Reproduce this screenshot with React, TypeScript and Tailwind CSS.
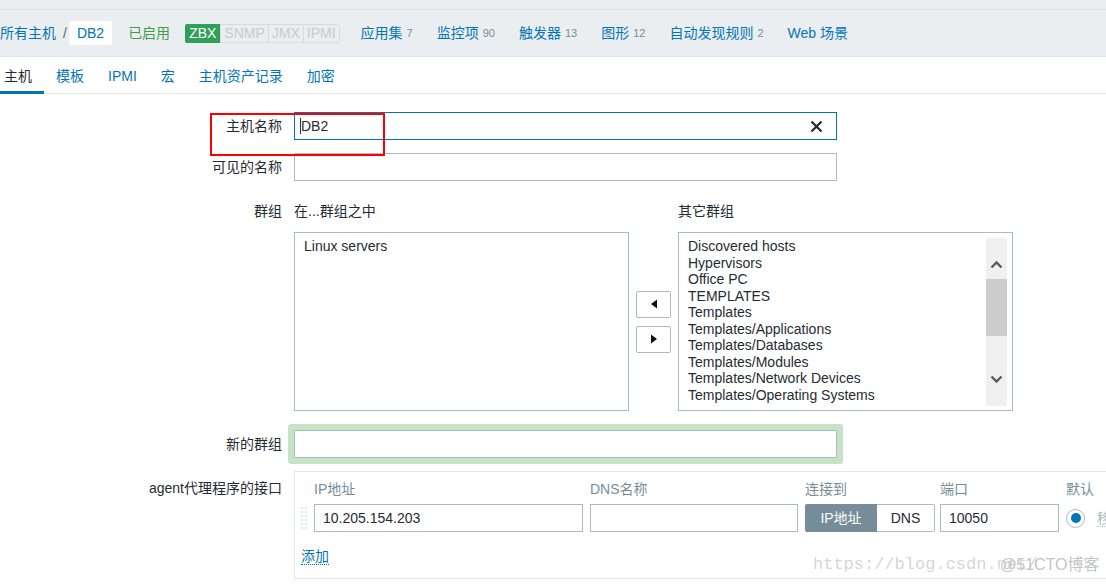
import React from "react";

const nav: [string, string][] = [
  ["应用集", "7"],
  ["监控项", "90"],
  ["触发器", "13"],
  ["图形", "12"],
  ["自动发现规则", "2"],
  ["Web 场景", ""],
];

const tabs = ["主机", "模板", "IPMI", "宏", "主机资产记录", "加密"];

const otherGroups = [
  "Discovered hosts",
  "Hypervisors",
  "Office PC",
  "TEMPLATES",
  "Templates",
  "Templates/Applications",
  "Templates/Databases",
  "Templates/Modules",
  "Templates/Network Devices",
  "Templates/Operating Systems",
];

function Chevron({ up }: { up?: boolean }) {
  return (
    <svg width="13" height="9" viewBox="0 0 13 9" className="mx-auto">
      <polyline
        points={up ? "1.5,7.5 6.5,2.5 11.5,7.5" : "1.5,1.5 6.5,6.5 11.5,1.5"}
        fill="none"
        stroke="#5a5a5a"
        strokeWidth="2.4"
      />
    </svg>
  );
}

function ArrowButton({ dir }: { dir: "left" | "right" }) {
  return (
    <button className="w-[35px] h-[27px] flex items-center justify-center bg-white border border-[#acbbc2] rounded-[2px]">
      <svg width="8" height="10" viewBox="0 0 8 10">
        <polygon points={dir === "left" ? "7,0.5 7,9.5 1,5" : "1,0.5 1,9.5 7,5"} fill="#111" />
      </svg>
    </button>
  );
}

function Row({ label, children, className = "" }: { label: string; children: React.ReactNode; className?: string }) {
  return (
    <div className={`flex items-center ${className}`}>
      <div className="w-[282px] text-right shrink-0">{label}</div>
      {children}
    </div>
  );
}

export default function App() {
  return (
    <div className="relative w-[1106px] h-[584px] overflow-hidden bg-white text-[14px] leading-[16px] text-[#1f2c33] font-['Liberation_Sans','Noto_Sans_CJK_SC',sans-serif]">
      {/* header */}
      <div className="h-[10px] bg-[#ebeef0] border-b border-[#dde3e6]" />
      <div className="h-[47px] bg-[#ebeef0] border-b border-[#dde3e6] flex items-center whitespace-nowrap">
        <span className="text-[#0275b8]">所有主机</span>
        <span className="ml-[7px] text-[#5a6b74]">/</span>
        <span className="ml-[2px] h-[24px] px-[8px] flex items-center bg-white rounded-[3px] text-[#0275b8]">DB2</span>
        <span className="ml-[16px] text-[#3d9f49]">已启用</span>
        <div className="ml-[15px] flex h-[19px] rounded-[2px] overflow-hidden">
          <span className="px-[4px] flex items-center bg-[#2f9f5a] text-white">ZBX</span>
          <span className="px-[3px] flex items-center border border-[#d5dbde] text-[#c3ccd1]">SNMP</span>
          <span className="px-[3px] flex items-center border border-l-0 border-[#d5dbde] text-[#c3ccd1]">JMX</span>
          <span className="px-[3px] flex items-center border border-l-0 border-[#d5dbde] text-[#c3ccd1] rounded-r-[2px]">IPMI</span>
        </div>
        <div className="ml-[21px] flex items-center gap-[24px]">
          {nav.map(([t, n]) => (
            <span key={t} className="flex items-center">
              <span className="text-[#0275b8]">{t}</span>
              {n && <span className="ml-[4px] text-[11px] text-[#768d99]">{n}</span>}
            </span>
          ))}
        </div>
      </div>

      {/* tabs */}
      <div className="h-[37px] border-b border-[#e6eaec] flex -ml-[8px]">
        {tabs.map((t, i) => (
          <div
            key={t}
            className={`px-[12px] h-[37px] flex items-center ${
              i === 0 ? "text-[#1f2c33] border-b-[3px] border-[#0275b8] pt-[3px]" : "text-[#0275b8]"
            }`}
          >
            {t}
          </div>
        ))}
      </div>

      {/* form */}
      <div className="pt-[18px]">
        <Row label="主机名称">
          <div className="ml-[12px] w-[543px] h-[28px] border border-[#0275b8] flex items-center pl-[5px] pr-[13px]">
            <span className="w-[1px] h-[16px] bg-[#333]" />
            <span>DB2</span>
            <svg width="13" height="13" viewBox="0 0 13 13" className="ml-auto">
              <path d="M1.5 1.5 L11.5 11.5 M11.5 1.5 L1.5 11.5" stroke="#1f2c33" strokeWidth="2.2" />
            </svg>
          </div>
        </Row>

        <Row label="可见的名称" className="mt-[13px]">
          <div className="ml-[12px] w-[543px] h-[28px] border border-[#acbbc2]" />
        </Row>

        <div className="mt-[22px] flex">
          <div className="w-[282px] text-right shrink-0">群组</div>
          <div className="ml-[12px]">
            <div className="grid grid-cols-[335px_35px_335px] gap-x-[7px]">
              <div>在...群组之中</div>
              <div />
              <div>其它群组</div>
            </div>
            <div className="mt-[13px] grid grid-cols-[335px_35px_335px] gap-x-[7px] h-[179px]">
              <div className="border border-[#acbbc2] pl-[9px] pt-[5px] leading-[16.5px]">Linux servers</div>
              <div className="flex flex-col items-center justify-center gap-[8px]">
                <ArrowButton dir="left" />
                <ArrowButton dir="right" />
              </div>
              <div className="border border-[#acbbc2] flex">
                <div className="flex-1 pl-[9px] pt-[5px] leading-[16.5px] whitespace-nowrap">
                  {otherGroups.map((g) => (
                    <div key={g}>{g}</div>
                  ))}
                </div>
                <div className="w-[21px] mt-[5px] mb-[4px] mr-[5px] bg-[#f0f0f0] flex flex-col pt-[22px] pb-[22px]">
                  <Chevron up />
                  <div className="mt-[10px] h-[57px] bg-[#cdcdcd]" />
                  <div className="flex-1" />
                  <Chevron />
                </div>
              </div>
            </div>
          </div>
        </div>

        <Row label="新的群组" className="mt-[13px]">
          <div className="ml-[6px] p-[6px] bg-[#c6e3c8] rounded-[3px]">
            <div className="w-[543px] h-[28px] bg-white border border-[#acbbc2]" />
          </div>
        </Row>

        <div className="mt-[7px] flex">
          <div className="w-[282px] text-right shrink-0 pt-[9px]">agent代理程序的接口</div>
          <div className="ml-[12px] w-[900px] h-[108px] shrink-0 border border-[#e3e8eb] pt-[9px] whitespace-nowrap">
            <div className="flex pl-[19px] text-[#768d99]">
              <div className="w-[276px] shrink-0">IP地址</div>
              <div className="w-[215px] shrink-0">DNS名称</div>
              <div className="w-[135px] shrink-0">连接到</div>
              <div className="w-[126px] shrink-0">端口</div>
              <div>默认</div>
            </div>
            <div className="mt-[7px] flex items-center pl-[6px]">
              <svg width="7" height="22" viewBox="0 0 7 22" className="shrink-0">
                {[0, 4, 8, 12, 16, 20].map((y) => (
                  <g key={y}>
                    <rect x="0" y={y} width="2" height="2" fill="#dfe4e7" />
                    <rect x="4" y={y} width="2" height="2" fill="#dfe4e7" />
                  </g>
                ))}
              </svg>
              <div className="ml-[6px] w-[269px] shrink-0 h-[28px] border border-[#acbbc2] flex items-center pl-[8px]">10.205.154.203</div>
              <div className="ml-[7px] w-[208px] shrink-0 h-[28px] border border-[#acbbc2]" />
              <div className="ml-[7px] w-[130px] shrink-0 h-[28px] flex">
                <div className="w-[72px] bg-[#768d99] text-white flex items-center justify-center rounded-l-[2px]">IP地址</div>
                <div className="flex-1 border border-l-0 border-[#acbbc2] flex items-center justify-center rounded-r-[2px]">DNS</div>
              </div>
              <div className="ml-[5px] w-[119px] shrink-0 h-[28px] border border-[#acbbc2] flex items-center pl-[8px]">10050</div>
              <div className="ml-[7px] w-[19px] h-[19px] shrink-0 rounded-full border border-[#acbbc2] flex items-center justify-center">
                <div className="w-[10px] h-[10px] rounded-full bg-[#0275b8]" />
              </div>
              <span className="ml-[12px] text-[#acbbc2] border-b border-dotted border-[#acbbc2]">移除</span>
            </div>
            <div className="mt-[16px] pl-[6px]">
              <span className="inline-block text-[#0275b8] border-b border-dotted border-[#0275b8]">添加</span>
            </div>
          </div>
        </div>
      </div>

      {/* annotation box */}
      <div className="absolute left-[210px] top-[113px] w-[175px] h-[43px] border-2 border-[#ff0000]" />

      {/* watermark */}
      <div className="absolute left-[813px] top-[555px] text-[17px] leading-[20px] text-[#d6d6d6] font-['Liberation_Mono',monospace]">
        https://blog.csdn.net/
      </div>
      <div className="absolute left-[1000px] top-[555px] text-[16px] leading-[20px] text-[#c4c4c4]">@51CTO博客</div>
    </div>
  );
}
